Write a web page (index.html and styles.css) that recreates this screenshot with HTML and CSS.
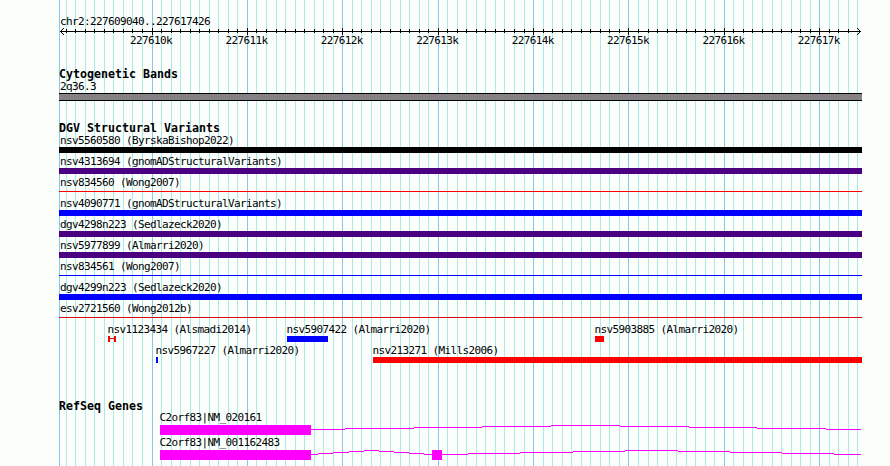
FILE: index.html
```
<!DOCTYPE html>
<html lang="en">
<head>
<meta charset="utf-8">
<title>chr2:227609040..227617426</title>
<link rel="stylesheet" href="styles.css">
</head>
<body>
<main class="browser">
  <svg class="grid" width="890" height="466" aria-hidden="true"><path id="minor" class="minor"/><path id="major" class="major"/></svg>
  <header class="ruler">
    <div class="label">chr2:227609040..227617426</div>
    <svg class="axis" width="803" height="9" aria-hidden="true"><path id="ticks" class="ink"/><path class="ink" d="M1 4h801v1h-801zM1 4h1v1h-1zM2 3h1v3h-1zM3 2h1v1h-1zM3 6h1v1h-1zM4 1h1v1h-1zM4 7h1v1h-1zM800 3h1v3h-1zM799 2h1v1h-1zM799 6h1v1h-1zM798 1h1v1h-1zM798 7h1v1h-1z"/></svg>
    <div class="scale"><span>227610k</span><span>227611k</span><span>227612k</span><span>227613k</span><span>227614k</span><span>227615k</span><span>227616k</span><span>227617k</span></div>
  </header>
  <section class="bands">
    <h2>Cytogenetic Bands</h2>
    <div class="label">2q36.3</div>
    <div class="band"></div>
  </section>
  <section class="variants">
    <h2>DGV Structural Variants</h2>
    <div class="row"><div class="label">nsv5560580 (ByrskaBishop2022)</div><div class="bar black"></div></div>
    <div class="row"><div class="label">nsv4313694 (gnomADStructuralVariants)</div><div class="bar indigo"></div></div>
    <div class="row"><div class="label">nsv834560 (Wong2007)</div><div class="bar thin red"></div></div>
    <div class="row"><div class="label">nsv4090771 (gnomADStructuralVariants)</div><div class="bar blue"></div></div>
    <div class="row"><div class="label">dgv4298n223 (Sedlazeck2020)</div><div class="bar indigo"></div></div>
    <div class="row"><div class="label">nsv5977899 (Almarri2020)</div><div class="bar indigo"></div></div>
    <div class="row"><div class="label">nsv834561 (Wong2007)</div><div class="bar thin blue"></div></div>
    <div class="row"><div class="label">dgv4299n223 (Sedlazeck2020)</div><div class="bar blue"></div></div>
    <div class="row"><div class="label">esv2721560 (Wong2012b)</div><div class="bar thin crimson"></div></div>
    <div class="row split">
      <div class="feature alsmadi"><div class="label">nsv1123434 (Alsmadi2014)</div><div class="bar span"></div></div>
      <div class="feature almarri"><div class="label">nsv5907422 (Almarri2020)</div><div class="bar blue"></div></div>
      <div class="feature almarri-b"><div class="label">nsv5903885 (Almarri2020)</div><div class="bar red"></div></div>
    </div>
    <div class="row split">
      <div class="feature almarri-c"><div class="label">nsv5967227 (Almarri2020)</div><div class="bar blue"></div></div>
      <div class="feature mills"><div class="label">nsv213271 (Mills2006)</div><div class="bar red"></div></div>
    </div>
  </section>
  <section class="genes">
    <h2>RefSeq Genes</h2>
    <div class="gene"><div class="label">C2orf83|NM_020161</div>
      <svg width="702" height="10" aria-hidden="true"><path class="gene-shape" d="M0 0h151v10H0zM151 4h34v1h-34zM185 3h69v1h-69zM254 2h68v1h-68zM322 1h69v1h-69zM391 0h69v1h-69zM460 1h69v1h-69zM529 2h68v1h-68zM597 3h69v1h-69zM666 4h35v1h-35z"/></svg></div>
    <div class="gene"><div class="label">C2orf83|NM_001162483</div>
      <svg width="702" height="10" aria-hidden="true"><path class="gene-shape" d="M0 0h151v10H0zM151 4h7v1h-7zM158 3h15v1h-15zM173 2h16v1h-16zM189 1h15v1h-15zM204 0h15v1h-15zM219 1h15v1h-15zM234 2h15v1h-15zM249 3h15v1h-15zM264 4h8v1h-8zM272 0h10v10h-10zM282 4h26v1h-26zM308 3h52v1h-52zM360 2h53v1h-53zM413 1h52v1h-52zM465 0h53v1h-53zM518 1h52v1h-52zM570 2h52v1h-52zM622 3h52v1h-52zM674 4h27v1h-27z"/></svg></div>
  </section>
</main>
<script src="grid.js"></script>
</body>
</html>
```
FILE: grid.js
```
// Vertical rules every 100 bp, with a stronger one every 1000 bp.
let minor = '', major = 'M59 0h1v466h-1z', ticks = '';
for (let j = -9; j <= 74; j++) {
  const x = Math.floor(152 + 9.539 * j);
  const line = `M${x} 0h1v466h-1z`;
  if (j % 10 === 0) {
    major += line;
    ticks += `M${x - 59} 1h1v7h-1z`;
  } else {
    minor += line;
    if (j < 74) ticks += `M${x - 59} 2h1v4h-1z`;
  }
}
document.getElementById('minor').setAttribute('d', minor);
document.getElementById('major').setAttribute('d', major);
document.getElementById('ticks').setAttribute('d', ticks);
```
FILE: styles.css
```
* { box-sizing: border-box; }
body { margin: 0; background: #fcfefc; color: #000; }
.browser {
  position: relative;
  width: 890px;
  height: 466px;
  padding: 15px 0 0 59px;
  overflow: hidden;
  font-family: "DejaVu Sans Mono", monospace;
}
.browser > * { position: relative; width: 803px; }
.browser > .grid { position: absolute; top: 0; left: 0; width: 890px; }
svg { display: block; shape-rendering: crispEdges; }
.minor { fill: #a9ebe9; }
.major { fill: #84cbeb; }
.ink { fill: #000; }
.label, .scale {
  height: 12px;
  padding-left: 1px;
  font-size: 11px;
  line-height: 12px;
  letter-spacing: -0.622px;
  white-space: pre;
}
.label { line-height: 14px; }
h2 {
  height: 12px;
  margin: 0;
  font-size: 11.63px;
  line-height: 12px;
  font-weight: 700;
  white-space: pre;
}
.scale { display: flex; gap: 53.4px; padding-left: 71px; margin-top: -1px; }
.scale span { flex: 0 0 42px; }
.bands { margin-top: 21px; }
.band { height: 8px; margin-top: 1px; border: solid #000; border-width: 1px 0; background: #858184; }
.variants { margin-top: 21px; }
.row { height: 21px; }
.bar { height: 6px; margin-top: 1px; }
.thin { height: 1px; margin-top: 3px; }
.black { background: #000; }
.indigo { background: #4b0082; }
.red { background: #f00; }
.blue { background: #00f; }
.crimson { background: #dc0814; }
.split { display: flex; }
.feature { flex: none; }
.feature .label { padding-left: 0; margin-left: -0.6px; }
.alsmadi { width: 179px; margin-left: 49px; }
.alsmadi .bar { width: 8px; border: solid #f00; border-width: 0 2px; background: linear-gradient(#f00, #f00) 0 2px / 100% 1px no-repeat; }
.almarri { width: 308px; }
.almarri .bar { width: 41px; }
.almarri-b .bar { width: 9px; }
.almarri-c { width: 217px; margin-left: 97px; }
.almarri-c .bar { width: 2px; }
.mills { width: 489px; }
.genes { margin-top: 35px; }
.gene { height: 25px; padding-left: 101px; }
.gene .label { padding-left: 0; margin-left: -0.6px; line-height: 12px; }
.gene svg { margin-top: 1px; }
.gene-shape { fill: #f0f; }
```
